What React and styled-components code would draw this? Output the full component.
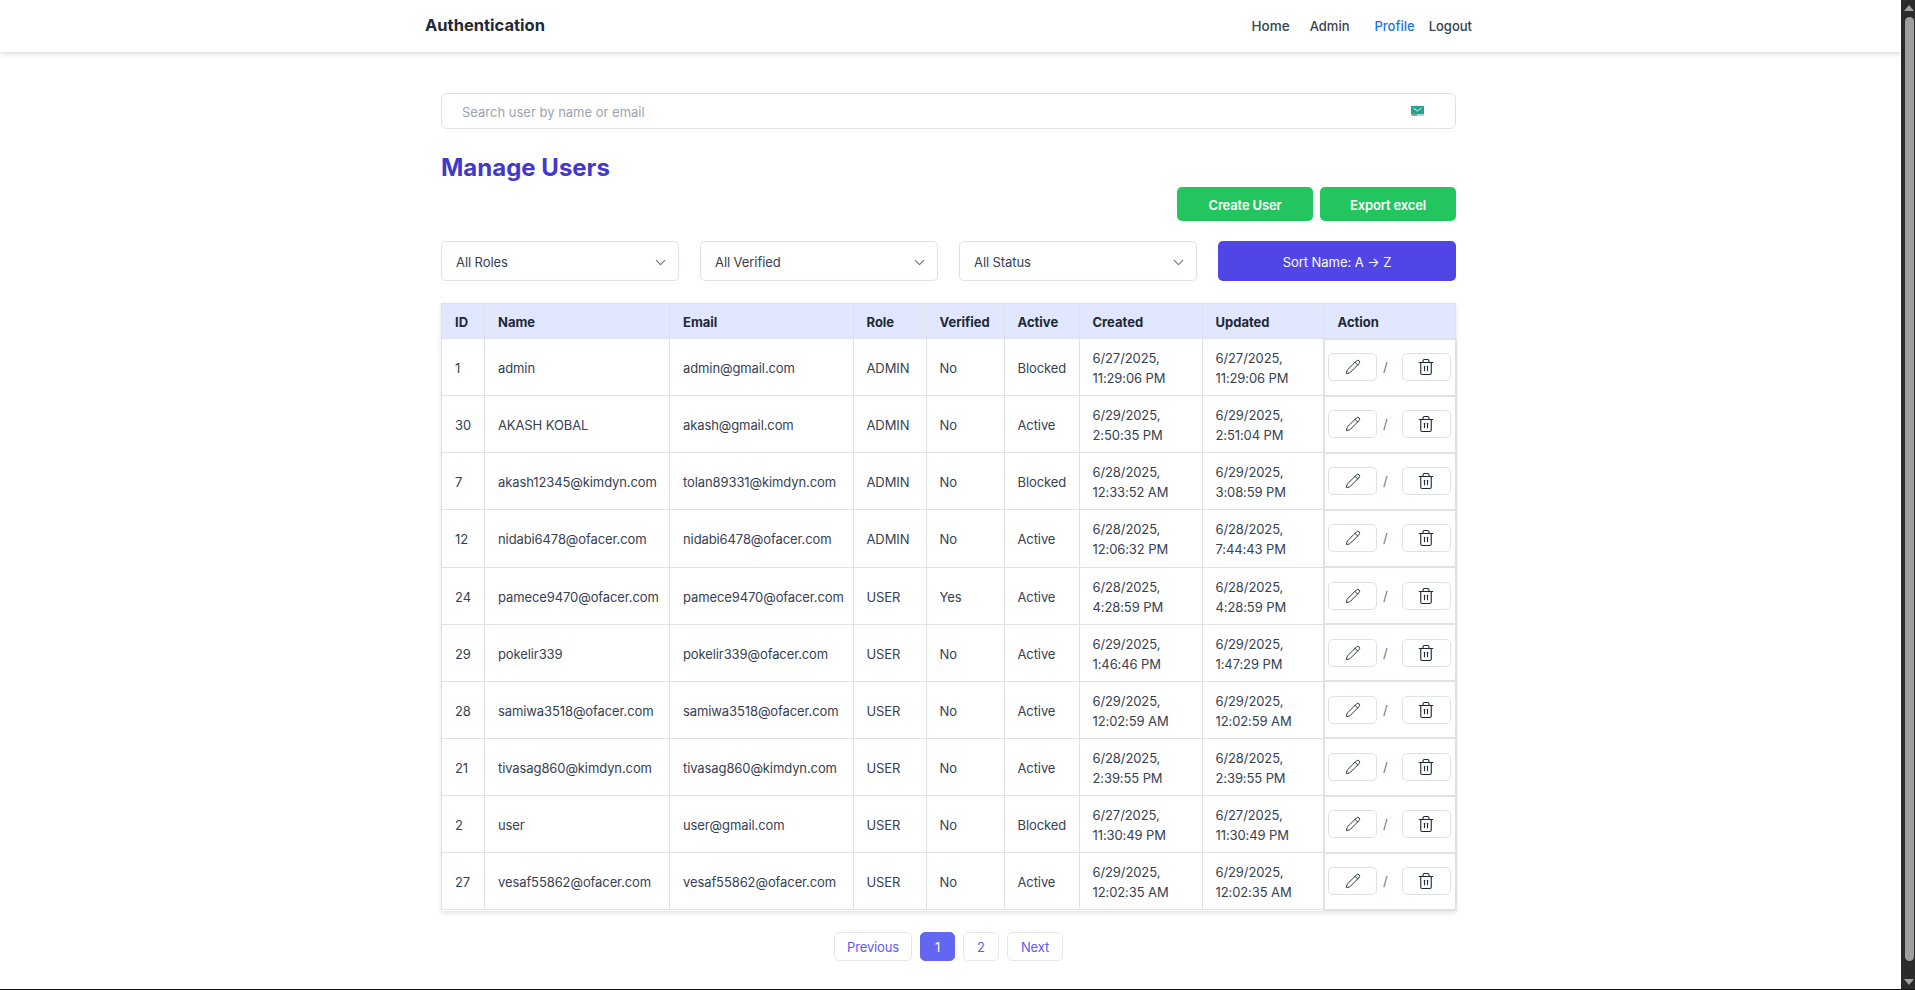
import React from "react";
import styled, { createGlobalStyle } from "styled-components";
import { ChevronDown, Pencil, Trash2 } from "lucide-react";

const GlobalStyle = createGlobalStyle`
  html, body {
    margin: 0;
    padding: 0;
    height: 100%;
    overflow: hidden;
    background: #fff;
  }
  * {
    box-sizing: border-box;
  }
  body {
    font-family: Inter, "Noto Sans", "Liberation Sans", sans-serif;
    color: #374151;
  }
`;

const users = [
  [1, "admin", "admin@gmail.com", "ADMIN", "No", "Blocked", "6/27/2025, 11:29:06 PM", "6/27/2025, 11:29:06 PM"],
  [30, "AKASH KOBAL", "akash@gmail.com", "ADMIN", "No", "Active", "6/29/2025, 2:50:35 PM", "6/29/2025, 2:51:04 PM"],
  [7, "akash12345@kimdyn.com", "tolan89331@kimdyn.com", "ADMIN", "No", "Blocked", "6/28/2025, 12:33:52 AM", "6/29/2025, 3:08:59 PM"],
  [12, "nidabi6478@ofacer.com", "nidabi6478@ofacer.com", "ADMIN", "No", "Active", "6/28/2025, 12:06:32 PM", "6/28/2025, 7:44:43 PM"],
  [24, "pamece9470@ofacer.com", "pamece9470@ofacer.com", "USER", "Yes", "Active", "6/28/2025, 4:28:59 PM", "6/28/2025, 4:28:59 PM"],
  [29, "pokelir339", "pokelir339@ofacer.com", "USER", "No", "Active", "6/29/2025, 1:46:46 PM", "6/29/2025, 1:47:29 PM"],
  [28, "samiwa3518@ofacer.com", "samiwa3518@ofacer.com", "USER", "No", "Active", "6/29/2025, 12:02:59 AM", "6/29/2025, 12:02:59 AM"],
  [21, "tivasag860@kimdyn.com", "tivasag860@kimdyn.com", "USER", "No", "Active", "6/28/2025, 2:39:55 PM", "6/28/2025, 2:39:55 PM"],
  [2, "user", "user@gmail.com", "USER", "No", "Blocked", "6/27/2025, 11:30:49 PM", "6/27/2025, 11:30:49 PM"],
  [27, "vesaf55862@ofacer.com", "vesaf55862@ofacer.com", "USER", "No", "Active", "6/29/2025, 12:02:35 AM", "6/29/2025, 12:02:35 AM"],
];

const columns = [
  ["ID", 43],
  ["Name", 185],
  ["Email", 183.5],
  ["Role", 73],
  ["Verified", 78],
  ["Active", 75],
  ["Created", 123],
  ["Updated", 122],
  ["Action", 131.5],
];

const App = () => (
  <>
    <GlobalStyle />
    <Screen>
      <Page>
        <Navbar>
          <NavInner>
            <Brand>Authentication</Brand>
            <NavLinks>
              <NavLink $gap={20} $wide>Home</NavLink>
              <NavLink $gap={25}>Admin</NavLink>
              <NavLink $gap={14} $active>Profile</NavLink>
              <NavLink>Logout</NavLink>
            </NavLinks>
          </NavInner>
        </Navbar>

        <Main>
          <SearchBox>
            <SearchInput placeholder="Search user by name or email" />
            <MailBadge>
              <svg width="13" height="12" viewBox="0 0 13 12">
                <rect x="0" y="1" width="13" height="8" fill="#1fa58f" />
                <path d="M2.5 3 L6.5 6 L10.5 3" fill="none" stroke="#dff5ef" strokeWidth="1" />
                <rect x="0" y="9" width="13" height="2" fill="#a9dccf" />
                <rect x="1" y="9.5" width="5" height="1" fill="#58707a" />
              </svg>
            </MailBadge>
          </SearchBox>

          <Title>Manage Users</Title>

          <ActionBar>
            <GreenButton>Create User</GreenButton>
            <GreenButton>Export excel</GreenButton>
          </ActionBar>

          <Filters>
            <Select label="All Roles" />
            <Select label="All Verified" />
            <Select label="All Status" />
            <SortButton>Sort Name: A → Z</SortButton>
          </Filters>

          <TableWrap>
            <Table>
              <colgroup>
                {columns.map(([name, width]) => (
                  <col key={name} style={{ width }} />
                ))}
              </colgroup>
              <thead>
                <tr>
                  {columns.map(([name]) => (
                    <Th key={name}>{name}</Th>
                  ))}
                </tr>
              </thead>
              <tbody>
                {users.map((user) => (
                  <tr key={user[0]}>
                    {user.map((value, i) => (
                      <Td key={i}>{value}</Td>
                    ))}
                    <ActionCell>
                      <ActionRow>
                        <IconButton>
                          <Pencil size={16} strokeWidth={1.4} />
                        </IconButton>
                        <Slash>/</Slash>
                        <IconButton>
                          <Trash2 size={18} strokeWidth={1.5} />
                        </IconButton>
                      </ActionRow>
                    </ActionCell>
                  </tr>
                ))}
              </tbody>
            </Table>
          </TableWrap>

          <Pagination>
            <PageButton $width={78}>Previous</PageButton>
            <PageButton $width={35} $active>1</PageButton>
            <PageButton $width={36}>2</PageButton>
            <PageButton $width={56}>Next</PageButton>
          </Pagination>
        </Main>
      </Page>

      <Scrollbar>
        <ArrowUp />
        <Thumb />
        <ArrowDown />
      </Scrollbar>
    </Screen>
    <WindowEdge />
  </>
);

const Select = ({ label }) => (
  <SelectBox>
    <span>{label}</span>
    <ChevronDown size={17} strokeWidth={1.5} color="#6b7280" />
  </SelectBox>
);

export default App;

const Screen = styled.div`
  display: flex;
  height: 989px;
`;
const Page = styled.div`
  flex: 1;
  min-width: 0;
`;
const Navbar = styled.header`
  height: 52px;
  background: #fff;
  box-shadow: 0 1px 6px rgba(0, 0, 0, 0.18);
`;
const NavInner = styled.nav`
  width: 1047px;
  margin-left: 425px;
  height: 100%;
  display: flex;
  align-items: center;
  justify-content: space-between;
`;
const Brand = styled.div`
  font-size: 16.5px;
  font-weight: 700;
  color: #1f2937;
  margin-top: -2px;
`;
const NavLinks = styled.div`
  display: flex;
  align-items: center;
`;
const NavLink = styled.a`
  font-size: ${(p) => (p.$wide ? 13.5 : 13)}px;
  font-weight: 500;
  margin-right: ${(p) => p.$gap || 0}px;
  color: ${(p) => (p.$active ? "#1a73f0" : "#374151")};
`;
const Main = styled.main`
  width: 1015px;
  margin-left: 441px;
  padding-top: 41px;
`;
const SearchBox = styled.div`
  position: relative;
  height: 36px;
`;
const SearchInput = styled.input`
  width: 100%;
  height: 100%;
  padding: 2px 20px 0;
  border: 1px solid #e0e2e8;
  border-radius: 6px;
  outline: none;
  font-family: inherit;
  font-size: 13px;
  &::placeholder {
    color: #9ca3af;
    opacity: 1;
  }
`;
const MailBadge = styled.span`
  position: absolute;
  top: 12px;
  right: 32px;
  line-height: 0;
`;
const Title = styled.h1`
  margin: 0;
  padding-top: 23px;
  font-size: 24px;
  line-height: 32px;
  font-weight: 700;
  color: #4338ca;
`;
const ActionBar = styled.div`
  display: flex;
  justify-content: flex-end;
  gap: 7px;
  margin-top: 3px;
`;
const GreenButton = styled.button`
  width: 136px;
  height: 34px;
  padding: 2px 0 0;
  border: none;
  border-radius: 5px;
  background: #22c55e;
  color: #fff;
  font-family: inherit;
  font-size: 13px;
  font-weight: 600;
  letter-spacing: -0.15px;
`;
const Filters = styled.div`
  display: grid;
  grid-template-columns: repeat(4, 238px);
  gap: 21px;
  margin-top: 20px;
`;
const SelectBox = styled.div`
  height: 40px;
  padding: 2px 9px 0 14px;
  display: flex;
  align-items: center;
  justify-content: space-between;
  border: 1px solid #e0e2e8;
  border-radius: 5px;
  font-size: 13px;
  letter-spacing: -0.08px;
  color: #374151;
`;
const SortButton = styled.button`
  height: 40px;
  padding: 1px 0 0;
  border: none;
  border-radius: 5px;
  background: #4f46e5;
  color: #fff;
  font-family: inherit;
  font-size: 13px;
  letter-spacing: -0.05px;
`;
const TableWrap = styled.div`
  width: 1015px;
  margin-top: 22px;
  box-shadow: 0 2px 5px rgba(0, 0, 0, 0.12);
`;
const Table = styled.table`
  width: 1014px;
  table-layout: fixed;
  border-collapse: collapse;
  font-size: 13px;
  letter-spacing: -0.1px;
`;
const Th = styled.th`
  height: 35px;
  padding: 2px 13px 0;
  border: 1px solid #e0e2e8;
  background: #e0e7ff;
  color: #1f2937;
  font-weight: 700;
  letter-spacing: 0;
  text-align: left;
`;
const Td = styled.td`
  height: 57.15px;
  padding: 2px 13px 0;
  border: 1px solid #e0e2e8;
  line-height: 20px;
  color: #374151;
`;
const ActionCell = styled.td`
  padding: 0 3px;
  border: 2px solid #e0e2e8;
`;
const ActionRow = styled.div`
  display: flex;
  align-items: center;
`;
const IconButton = styled.button`
  width: 49px;
  height: 28px;
  padding: 0;
  display: flex;
  align-items: center;
  justify-content: center;
  background: #fff;
  border: 1px solid #e0e2e8;
  border-radius: 5px;
  color: #1f2937;
`;
const Slash = styled.span`
  margin: 0 14px 0 6px;
  color: #6b7280;
`;
const Pagination = styled.div`
  display: flex;
  justify-content: center;
  gap: 8px;
  margin-top: 21px;
`;
const PageButton = styled.button`
  width: ${(p) => p.$width}px;
  height: 29px;
  padding: 1px 0 0;
  border: 1px solid ${(p) => (p.$active ? "#6366f1" : "#e5e7eb")};
  border-radius: 5px;
  background: ${(p) => (p.$active ? "#6366f1" : "#fff")};
  color: ${(p) => (p.$active ? "#fff" : "#5f5af0")};
  font-family: inherit;
  font-size: 13px;
  letter-spacing: -0.15px;
`;
const Scrollbar = styled.div`
  width: 14px;
  height: 100%;
  padding: 5px 1px 4px 3px;
  display: flex;
  flex-direction: column;
  align-items: center;
  background: #2b2b2b;
`;
const Thumb = styled.div`
  flex: 1;
  width: 9px;
  margin: 6px 0 18px;
  border-radius: 5px;
  background: #9f9f9f;
`;
const ArrowUp = styled.div`
  width: 0;
  height: 0;
  border-left: 5px solid transparent;
  border-right: 5px solid transparent;
  border-bottom: 6px solid #9f9f9f;
`;
const ArrowDown = styled(ArrowUp)`
  border-bottom: none;
  border-top: 6px solid #9f9f9f;
`;
const WindowEdge = styled.div`
  height: 1px;
  background: #111;
`;
